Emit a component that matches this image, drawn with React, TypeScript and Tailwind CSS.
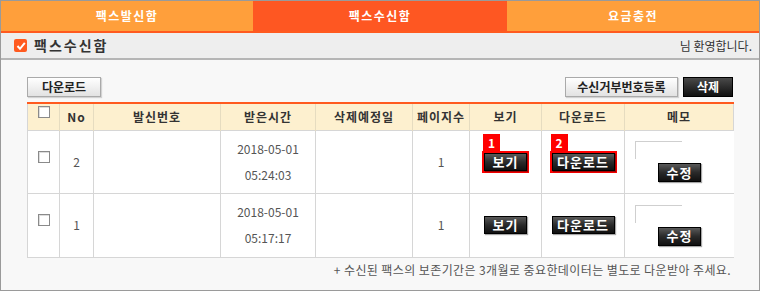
import React from "react";

const font = { fontFamily: '"Noto Sans CJK KR", "Noto Sans", sans-serif' };

function DarkBtn({ label, w, h = 18 }: { label: string; w: number; h?: number }) {
  return (
    <div
      className="flex items-center justify-center text-[13px] font-bold text-white bg-gradient-to-b from-[#5a5a5a] via-[#2a2a2a] to-[#111] border border-[#000] shadow-[1px_1px_1px_rgba(0,0,0,0.35)] tracking-[1px]"
      style={{ width: w, height: h }}
    >
      {label}
    </div>
  );
}

function LightBtn({ label, w }: { label: string; w: number }) {
  return (
    <div
      className="flex items-center justify-center h-[20px] text-[12px] font-bold text-[#222] bg-gradient-to-b from-[#ffffff] to-[#e2e2e2] border border-[#aaa] shadow-[1px_1px_1px_rgba(0,0,0,0.15)]"
      style={{ width: w }}
    >
      {label}
    </div>
  );
}

function Marked({ n, children }: { n: string; children: React.ReactNode }) {
  return (
    <div className="relative border-2 border-[#ff0000]">
      <div className="absolute left-[-1px] top-[-19px] w-[17px] h-[17px] bg-[#ff0000] text-white text-[12px] font-bold leading-[17px] text-center">
        {n}
      </div>
      {children}
    </div>
  );
}

function Check() {
  return <div className="w-[12px] h-[12px] bg-white border border-[#8a8a8a] shadow-[inset_1px_1px_0_#ddd]" />;
}

const cols = [32, 34, 127, 95, 97, 57, 72, 83, 109];

function Row({ no, date, time, marked }: { no: string; date: string; time: string; marked?: boolean }) {
  const td = "border-r border-[#d6d6d6] align-middle text-center p-0";
  return (
    <tr className="border-b border-[#d6d6d6]" style={{ height: marked ? 63 : 64 }}>
      <td className={td}>
        <div className="flex justify-center -translate-y-[5px]">
          <Check />
        </div>
      </td>
      <td className={`${td} text-[12px] text-[#555]`}>{no}</td>
      <td className={td}></td>
      <td className={`${td} text-[12px] text-[#555] leading-[26px]`}>
        <div>{date}</div>
        <div>{time}</div>
      </td>
      <td className={td}></td>
      <td className={`${td} text-[12px] text-[#555]`}>1</td>
      <td className={td}>
        <div className="flex justify-center">
          {marked ? (
            <Marked n="1">
              <DarkBtn label="보기" w={43} />
            </Marked>
          ) : (
            <DarkBtn label="보기" w={43} />
          )}
        </div>
      </td>
      <td className={td}>
        <div className="flex justify-center">
          {marked ? (
            <Marked n="2">
              <DarkBtn label="다운로드" w={63} />
            </Marked>
          ) : (
            <DarkBtn label="다운로드" w={63} />
          )}
        </div>
      </td>
      <td className="align-middle p-0">
        <div className="flex flex-col items-start pl-[10px] gap-[4px]">
          <div className="w-[47px] h-[18px] bg-white border-t border-l border-[#cfcfcf]" />
          <div className="ml-[23px]">
            <DarkBtn label="수정" w={43} h={19} />
          </div>
        </div>
      </td>
    </tr>
  );
}

export default function App() {
  const headers = ["", "No", "발신번호", "받은시간", "삭제예정일", "페이지수", "보기", "다운로드", "메모"];
  return (
    <div className="w-[760px] h-[291px] border border-[#9a9a9a] bg-[#f8f8f8] flex flex-col overflow-hidden" style={font}>
      <div className="flex h-[32px] border-b-[2px] border-[#ff5a1f]">
        <div className="w-[252px] bg-[#ff9f3b] flex items-center justify-center text-white text-[12px] font-bold tracking-[1.5px]">
          팩스발신함
        </div>
        <div className="w-[254px] bg-[#fe5722] flex items-center justify-center text-white text-[12px] font-bold tracking-[1.5px]">
          팩스수신함
        </div>
        <div className="flex-1 bg-[#ff9f3b] flex items-center justify-center text-white text-[12px] font-bold tracking-[1.5px]">
          요금충전
        </div>
      </div>
      <div className="h-[27px] bg-[#eeeeee] border-b-2 border-[#b5b5b5] flex items-center pl-[13px] pr-[7px]">
        <div className="w-[13px] h-[13px] rounded-[2px] bg-[#ff5a1f] flex items-center justify-center">
          <svg width="10" height="10" viewBox="0 0 10 10">
            <path d="M1.5 5 L4 7.8 L8.8 1.8" stroke="white" strokeWidth="2" fill="none" />
          </svg>
        </div>
        <div className="ml-[7px] text-[14px] font-bold text-[#333] tracking-[2px]">팩스수신함</div>
        <div className="ml-auto text-[12px] text-[#333]">님 환영합니다.</div>
      </div>
      <div className="px-[26px] pt-[16px]">
        <div className="flex items-center h-[21px]">
          <LightBtn label="다운로드" w={74} />
          <div className="ml-auto flex gap-[5px]">
            <LightBtn label="수신거부번호등록" w={113} />
            <div className="w-[50px] h-[20px] flex items-center justify-center text-[12px] font-bold text-white bg-gradient-to-b from-[#4a4a4a] to-[#111] border border-[#000]">
              삭제
            </div>
          </div>
        </div>
        <table className="mt-[5px] border-collapse table-fixed w-[706px] border-t-[2px] border-[#ff5a1f] border-l border-l-[#d6d6d6] bg-white">
          <colgroup>
            {cols.map((w, i) => (
              <col key={i} style={{ width: w }} />
            ))}
          </colgroup>
          <thead>
            <tr className="h-[27px] bg-[#fdf0cf] border-b border-[#d6d6d6]">
              {headers.map((h, i) => (
                <th
                  key={i}
                  className={`p-0 text-[12px] font-bold text-[#333] tracking-[1px] ${i < 8 ? "border-r border-[#e6dcc0]" : "border-r border-[#d6d6d6]"}`}
                >
                  {i === 0 ? (
                    <div className="flex justify-center -translate-y-[5px]">
                      <Check />
                    </div>
                  ) : (
                    h
                  )}
                </th>
              ))}
            </tr>
          </thead>
          <tbody>
            <Row no="2" date="2018-05-01" time="05:24:03" marked />
            <Row no="1" date="2018-05-01" time="05:17:17" />
          </tbody>
        </table>
        <div className="text-right text-[12px] text-[#555] mt-[3px] pr-[2px] tracking-[0.4px]">
          + 수신된 팩스의 보존기간은 3개월로 중요한데이터는 별도로 다운받아 주세요.
        </div>
      </div>
    </div>
  );
}
